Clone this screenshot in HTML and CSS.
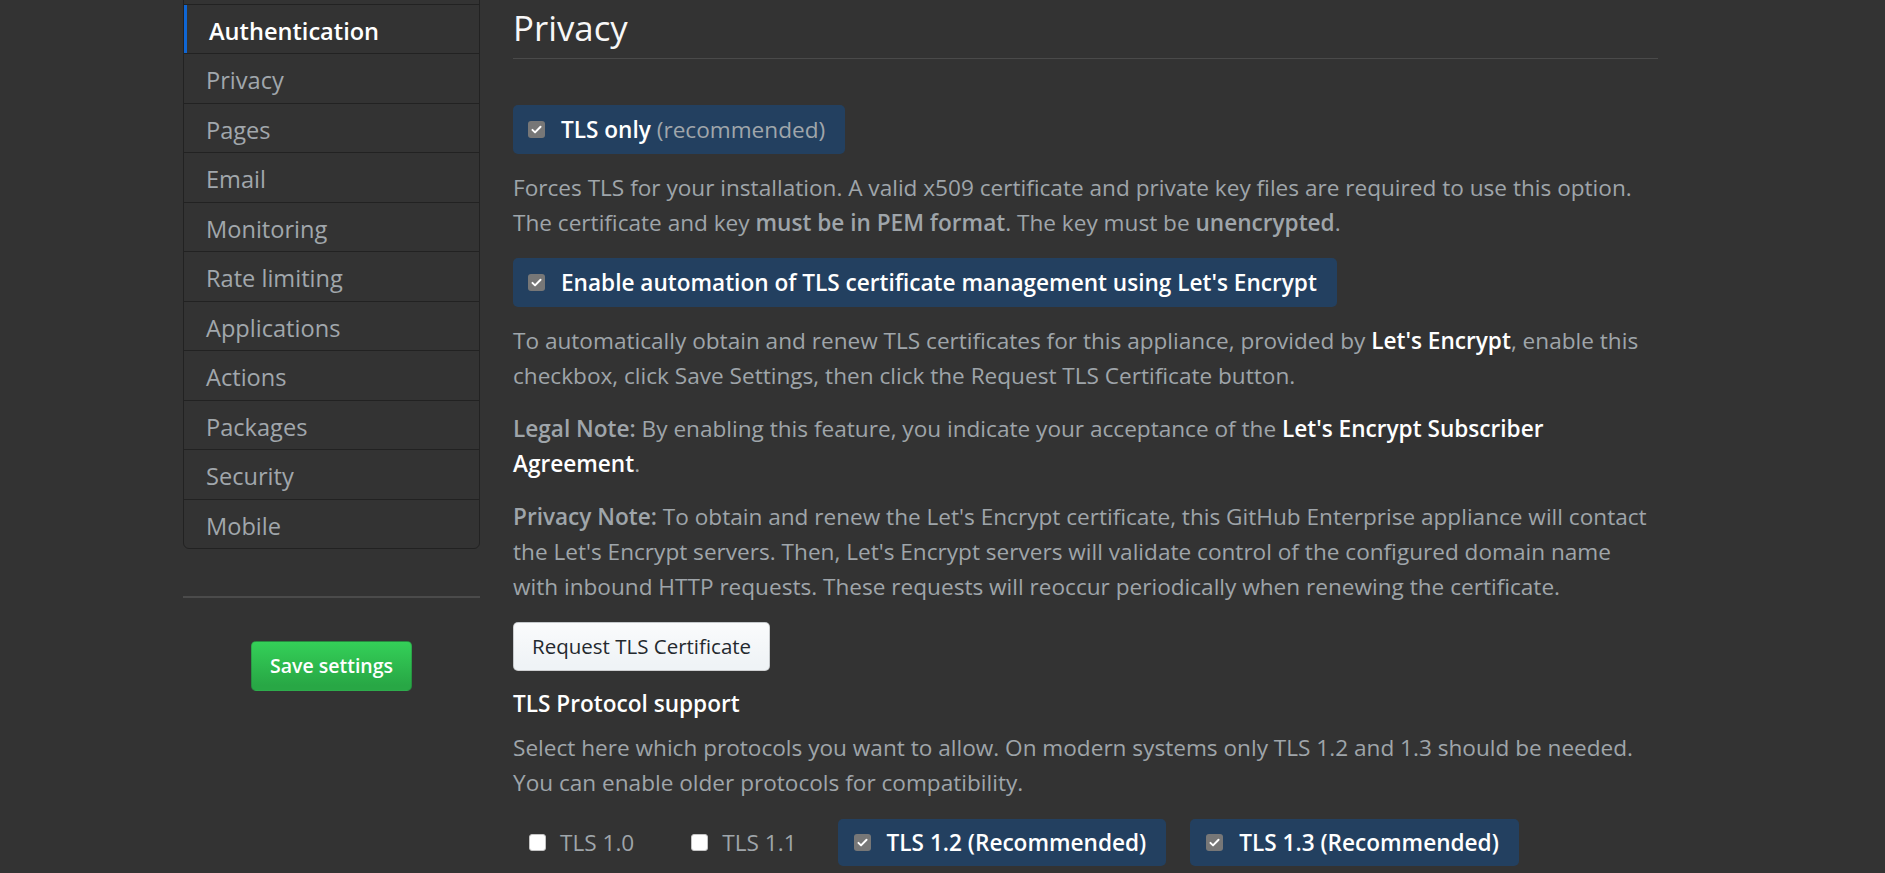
FILE: index.html
```html
<!DOCTYPE html>
<html lang="en">
<head>
<meta charset="utf-8">
<title>Management Console - Privacy</title>
<link rel="stylesheet" href="styles.css">
</head>
<body>
<div class="layout">
  <aside class="sidebar">
    <nav class="menu">
      <a class="menu-item">Hostname</a>
      <a class="menu-item selected">Authentication</a>
      <a class="menu-item">Privacy</a>
      <a class="menu-item">Pages</a>
      <a class="menu-item">Email</a>
      <a class="menu-item">Monitoring</a>
      <a class="menu-item">Rate limiting</a>
      <a class="menu-item">Applications</a>
      <a class="menu-item">Actions</a>
      <a class="menu-item">Packages</a>
      <a class="menu-item">Security</a>
      <a class="menu-item">Mobile</a>
    </nav>
    <hr class="divider">
    <div class="save-wrap"><button class="btn-primary">Save settings</button></div>
  </aside>

  <main class="content">
    <div class="subhead"><h2>Privacy</h2></div>

    <label class="check-box">
      <span class="cb"><svg viewBox="0 0 16 16" width="13" height="13"><path d="M3 8.4l3.2 3.2L13 4.6" fill="none" stroke="#fff" stroke-width="2.4" stroke-linecap="round" stroke-linejoin="round"/></svg></span>
      <span class="lbl-strong">TLS only</span>&nbsp;<span class="lbl-muted">(recommended)</span>
    </label>
    <p class="note">Forces TLS for your installation. A valid x509 certificate and private key files are required to use this option. The certificate and key <strong>must be in PEM format</strong>. The key must be <strong>unencrypted</strong>.</p>

    <label class="check-box">
      <span class="cb"><svg viewBox="0 0 16 16" width="13" height="13"><path d="M3 8.4l3.2 3.2L13 4.6" fill="none" stroke="#fff" stroke-width="2.4" stroke-linecap="round" stroke-linejoin="round"/></svg></span>
      <span class="lbl-strong">Enable automation of TLS certificate management using Let's Encrypt</span>
    </label>
    <p class="note">To automatically obtain and renew TLS certificates for this appliance, provided by <strong class="hi">Let's Encrypt</strong>, enable this checkbox, click Save Settings, then click the Request TLS Certificate button.</p>
    <p class="note"><strong>Legal Note:</strong> By enabling this feature, you indicate your acceptance of the <strong class="hi">Let's Encrypt Subscriber</strong> <strong class="hi">Agreement</strong>.</p>
    <p class="note"><strong>Privacy Note:</strong> To obtain and renew the Let's Encrypt certificate, this GitHub Enterprise appliance will contact the Let's Encrypt servers. Then, Let's Encrypt servers will validate control of the configured domain name with inbound HTTP requests. These requests will reoccur periodically when renewing the certificate.</p>

    <button class="btn">Request TLS Certificate</button>

    <h3 class="section-title">TLS Protocol support</h3>
    <p class="note note-tight">Select here which protocols you want to allow. On modern systems only TLS 1.2 and 1.3 should be needed. You can enable older protocols for compatibility.</p>

    <div class="protocols">
      <label class="proto"><span class="cb cb-off"></span>TLS 1.0</label>
      <label class="proto"><span class="cb cb-off"></span>TLS 1.1</label>
      <label class="proto on"><span class="cb"><svg viewBox="0 0 16 16" width="13" height="13"><path d="M3 8.4l3.2 3.2L13 4.6" fill="none" stroke="#fff" stroke-width="2.4" stroke-linecap="round" stroke-linejoin="round"/></svg></span>TLS 1.2 (Recommended)</label>
      <label class="proto on"><span class="cb"><svg viewBox="0 0 16 16" width="13" height="13"><path d="M3 8.4l3.2 3.2L13 4.6" fill="none" stroke="#fff" stroke-width="2.4" stroke-linecap="round" stroke-linejoin="round"/></svg></span>TLS 1.3 (Recommended)</label>
    </div>
  </main>
</div>
</body>
</html>
```

FILE: styles.css
```css
html, body {
  margin: 0;
  background: #333333;
  overflow: hidden;
}

body {
  font-family: "Open Sans", "Noto Sans", "DejaVu Sans", sans-serif;
  color: #9fa5aa;
}

.layout {
  display: grid;
  grid-template-columns: 297px 1145px;
  column-gap: 33px;
  padding-left: 183px;
  align-items: start;
}

/* ---------- sidebar ---------- */
.sidebar {
  margin-top: -46px;
}

.menu {
  display: flex;
  flex-direction: column;
  border: 1px solid #222222;
  border-radius: 6px;
  background: #333333;
}

.menu-item {
  display: block;
  padding: 4px 22px 0;
  line-height: 44.5px;
  font-size: 23.6px;
  color: #a1a7ac;
  text-decoration: none;
}

.menu-item + .menu-item {
  border-top: 1px solid #222222;
}

.menu-item.selected {
  color: #ffffff;
  font-weight: 600;
  padding-left: 25px;
  box-shadow: inset 3px 0 0 #0f66d4;
}

.divider {
  border: 0;
  height: 2px;
  background: #4b4b4b;
  margin: 47px 0 43px;
}

.save-wrap {
  display: flex;
  justify-content: center;
}

.btn-primary {
  font-family: inherit;
  font-size: 19.5px;
  font-weight: 600;
  line-height: 34px;
  color: #ffffff;
  padding: 7px 18px;
  border: 1px solid rgba(27, 31, 35, 0.2);
  border-radius: 5px;
  background: linear-gradient(180deg, #34d058, #28a745 90%);
}

/* ---------- content ---------- */
.subhead {
  margin-top: 5px;
  padding-bottom: 7px;
  border-bottom: 1px solid #4a4a4a;
  margin-bottom: 46px;
}

.subhead h2 {
  margin: 0;
  font-size: 34.8px;
  font-weight: 400;
  line-height: 46px;
  color: #f7f7f7;
}

.check-box {
  display: flex;
  align-items: center;
  width: fit-content;
  padding: 7px 20px 7px 15px;
  margin-bottom: 16px;
  background: #234060;
  border-radius: 5px;
  font-size: 22.6px;
  line-height: 35px;
}

.cb {
  flex: none;
  width: 17px;
  height: 17px;
  margin-right: 16px;
  border-radius: 3px;
  background: #777777;
  display: flex;
  align-items: center;
  justify-content: center;
}

.cb-off {
  background: #ffffff;
  border: 1px solid #c4c4c4;
  box-sizing: border-box;
  margin-right: 14px;
}

.lbl-strong {
  color: #ffffff;
  font-weight: 600;
}

.lbl-muted {
  color: #a0a6ab;
}

.note {
  margin: 0 0 18px;
  max-width: 1142px;
  font-size: 22.6px;
  line-height: 35px;
  color: #9fa5aa;
}

.note strong {
  font-weight: 600;
}

.note .hi {
  color: #ffffff;
}

.btn {
  display: block;
  font-family: inherit;
  font-size: 20.5px;
  line-height: 35px;
  color: #24292e;
  padding: 6px 18px;
  margin-bottom: 15px;
  border: 1px solid rgba(27, 31, 35, 0.2);
  border-radius: 5px;
  background: linear-gradient(180deg, #fafbfc, #eff3f6 90%);
}

.section-title {
  margin: 0 0 9px;
  font-size: 22.6px;
  font-weight: 600;
  line-height: 35px;
  color: #ffffff;
}

.note-tight {
  margin-bottom: 19px;
}

.protocols {
  display: flex;
  gap: 24px;
}

.proto {
  display: flex;
  align-items: center;
  padding: 6px 17px 6px 16px;
  border-radius: 5px;
  font-size: 22.6px;
  line-height: 35px;
  color: #9fa5aa;
}

.proto.on {
  padding-right: 20px;
  background: #234060;
  color: #ffffff;
  font-weight: 600;
}
```
